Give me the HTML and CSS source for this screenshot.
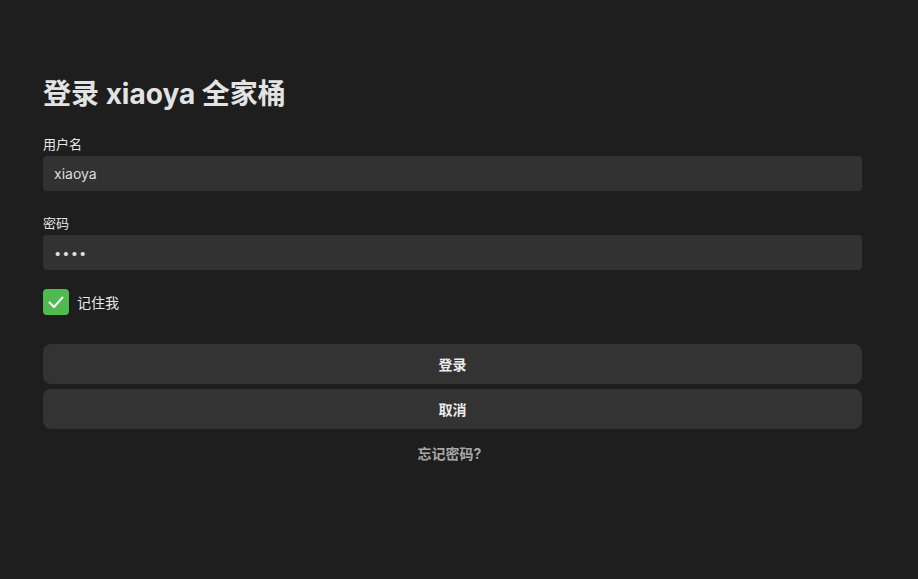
FILE: index.html
```html
<!DOCTYPE html>
<html lang="zh">
<head>
<meta charset="utf-8">
<title>登录 xiaoya 全家桶</title>
<link rel="stylesheet" href="styles.css">
</head>
<body>
<main class="login">
  <h1 class="title">登录 xiaoya 全家桶</h1>
  <form class="form">
    <label class="field">
      <span class="label">用户名</span>
      <input class="input" type="text" value="xiaoya">
    </label>
    <label class="field">
      <span class="label">密码</span>
      <input class="input pw" type="password" value="1234">
    </label>
    <label class="remember">
      <span class="check">
        <svg width="18" height="18" viewBox="0 0 18 18"><path d="M2.5 9.5 L7 14 L15.5 4.5" fill="none" stroke="#fff" stroke-width="2" stroke-linecap="round" stroke-linejoin="round"/></svg>
      </span>
      <span class="remember-text">记住我</span>
    </label>
    <div class="buttons">
      <button class="btn" type="button">登录</button>
      <button class="btn" type="button">取消</button>
    </div>
    <a class="forgot" href="#">忘记密码?</a>
  </form>
</main>
</body>
</html>
```

FILE: styles.css
```css
html, body {
  margin: 0;
  padding: 0;
  background: #1e1e1e;
  height: 100%;
}
body {
  font-family: Inter, "Noto Sans CJK SC", sans-serif;
  color: #e0e0e0;
}
.login {
  width: 819px;
  margin-left: 43px;
  padding-top: 74px;
}
.title {
  margin: 0 0 21px 0;
  font-size: 28px;
  font-weight: 700;
  line-height: 40px;
  color: #e3e3e3;
}
.form {
  display: flex;
  flex-direction: column;
}
.field {
  display: flex;
  flex-direction: column;
  gap: 3px;
  margin-bottom: 23px;
}
.label {
  font-size: 13px;
  line-height: 18px;
  color: #e6e6e6;
}
.input {
  box-sizing: border-box;
  height: 35px;
  border: none;
  border-radius: 4px;
  background: #323232;
  color: #dddddd;
  font-family: Inter, "Noto Sans CJK SC", sans-serif;
  font-size: 14px;
  padding: 0 11px;
  outline: none;
}
.pw {
  font-size: 13px;
  letter-spacing: 1px;
}
.remember {
  display: flex;
  align-items: center;
  gap: 8px;
  margin-top: -4px;
  margin-bottom: 29px;
}
.check {
  width: 26px;
  height: 26px;
  border-radius: 4px;
  background: #4fba4f;
  display: flex;
  align-items: center;
  justify-content: center;
}
.remember-text {
  font-size: 14px;
  color: #e6e6e6;
}
.buttons {
  display: flex;
  flex-direction: column;
  gap: 5px;
}
.btn {
  height: 40px;
  border: none;
  border-radius: 8px;
  background: #333333;
  color: #ebebeb;
  font-family: Inter, "Noto Sans CJK SC", sans-serif;
  font-size: 14px;
  font-weight: 700;
}
.forgot {
  align-self: center;
  margin-top: 14px;
  margin-right: 6px;
  font-size: 14px;
  font-weight: 700;
  color: #a8a8a8;
  text-decoration: none;
}
```
